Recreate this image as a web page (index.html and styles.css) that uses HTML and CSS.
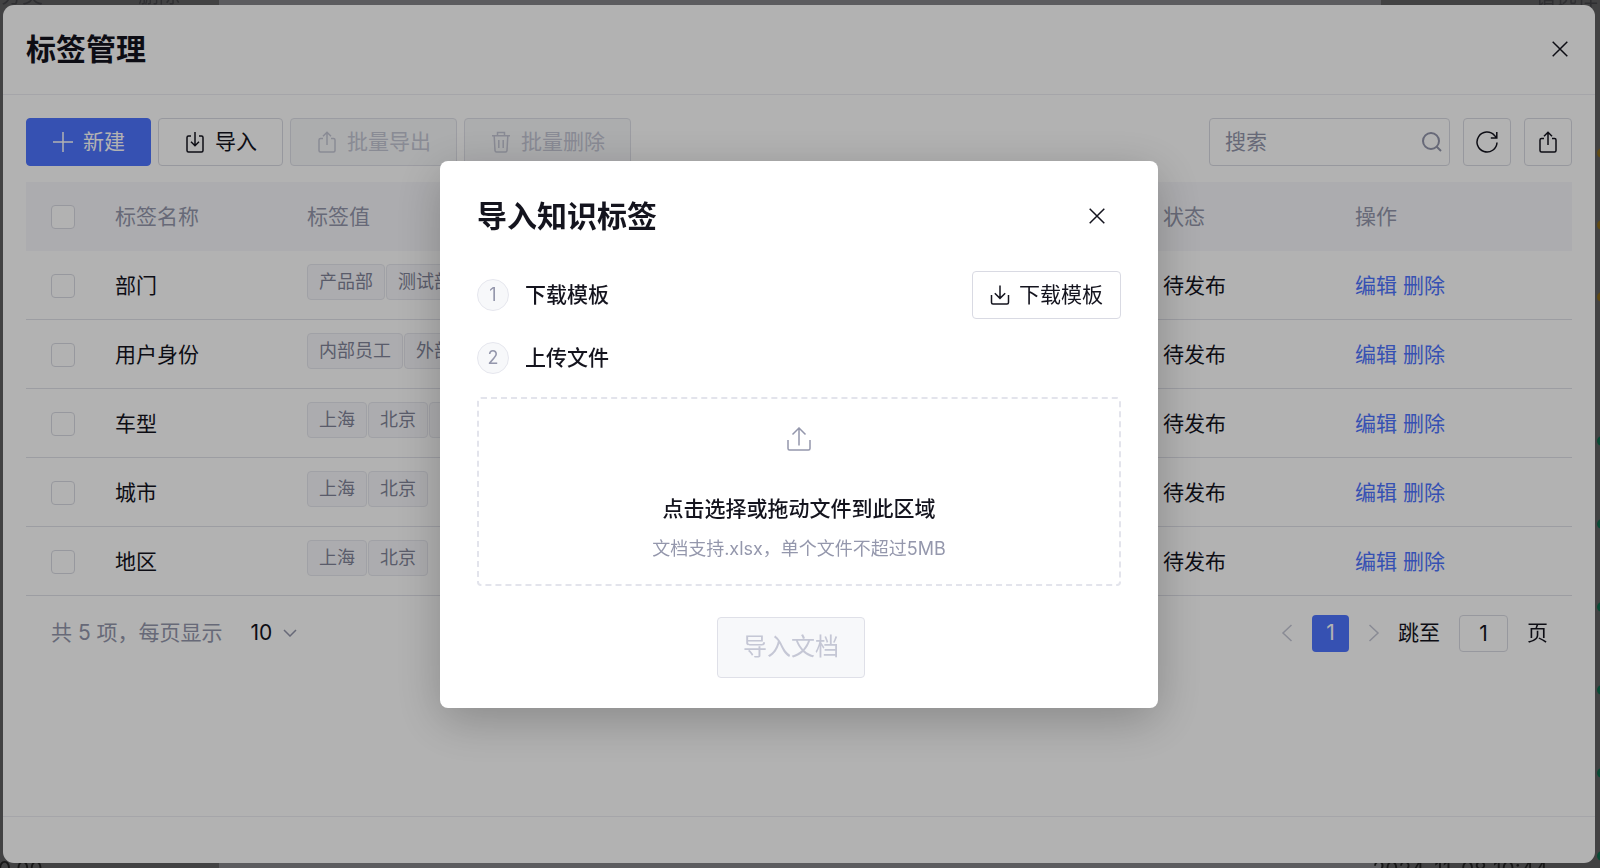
FILE: index.html
```html
<!DOCTYPE html>
<html lang="zh-CN">
  <head>
    <meta charset="UTF-8" />
    <meta name="viewport" content="width=device-width, initial-scale=1.0" />
    <title>标签管理</title>
    <link rel="stylesheet" href="styles.css">
  </head>
  <body>
    <!-- page under the drawer -->
    <div class="page" aria-hidden="true">
      <div class="page-side"></div>
      <div class="page-main"></div>
      <div class="page-side"></div>
      <span class="peek peek-category">分类</span>
      <span class="peek peek-delete">删除</span>
      <span class="peek peek-select">请选择</span>
      <span class="peek peek-size">0.00</span>
      <span class="peek peek-date">2024-11-08 10:44</span>
      <div class="dots">
        <i class="dot"></i>
        <i class="dot"></i>
        <i class="dot"></i>
        <i class="dot green"></i>
        <i class="dot green"></i>
        <i class="dot green"></i>
        <i class="dot green"></i>
        <i class="dot green"></i>
        <i class="dot green"></i>
      </div>
    </div>

    <section class="drawer">
      <header class="drawer-header">
        <h1>标签管理</h1>
        <button type="button" class="close" aria-label="关闭">
          <svg width="16" height="16" viewBox="0 0 16 16"><path d="M.7.7l14.6 14.6M15.3.7L.7 15.3" /></svg>
        </button>
      </header>

      <main class="drawer-body">
        <div class="toolbar">
          <button type="button" class="button primary">
            <svg width="22" height="22" viewBox="0 0 22 22"><path d="M11 1v20M1 11h20" /></svg>
            新建
          </button>
          <button type="button" class="button">
            <svg width="22" height="22" viewBox="0 0 22 22"><path d="M7 5H4.500Q3 5 3 6.500V19.500Q3 21 4.500 21H17.500Q19 21 19 19.500V6.500Q19 5 17.500 5H15M11 1v13.500M7 10.800l4 4 4-4" /></svg>
            导入
          </button>
          <button type="button" class="button" disabled>
            <svg width="22" height="22" viewBox="0 0 22 22"><path d="M7 7.500H4.500Q3 7.500 3 9V19.500Q3 21 4.500 21H17.500Q19 21 19 19.500V9Q19 7.500 17.500 7.500H15M11 14V1.500M7 5.200l4-4 4 4" /></svg>
            批量导出
          </button>
          <button type="button" class="button" disabled>
            <svg width="22" height="22" viewBox="0 0 22 22"><path d="M2 4.800h18M7.500 4.500V1.500h7v3M4.200 5l.8 14.500Q5.100 21 6.500 21h9Q16.900 21 17 19.500L17.800 5M8.800 9v8M13.200 9v8" /></svg>
            批量删除
          </button>
          <div class="search">
            <input type="text" placeholder="搜索" aria-label="搜索" />
            <svg width="20" height="20" viewBox="0 0 20 20"><circle cx="9" cy="9" r="8" /><path d="M14.500 14.500l4.500 4.500" /></svg>
          </div>
          <button type="button" class="button icon" aria-label="刷新">
            <svg width="22" height="22" viewBox="0 0 22 22"><path d="M21 11.500a10 10 0 1 1-2.500-7.100L20.500 6.500M20.800 1v6h-6" /></svg>
          </button>
          <button type="button" class="button icon" aria-label="导出">
            <svg width="22" height="22" viewBox="0 0 22 22"><path d="M7 7.500H4.500Q3 7.500 3 9V19.500Q3 21 4.500 21H17.500Q19 21 19 19.500V9Q19 7.500 17.500 7.500H15M11 14V1.500M7 5.200l4-4 4 4" /></svg>
          </button>
        </div>

        <table class="tags-table">
          <thead>
            <tr>
              <th class="col-check"><input type="checkbox" aria-label="全选" /></th>
              <th class="col-name">标签名称</th>
              <th>标签值</th>
              <th class="col-status">状态</th>
              <th class="col-action">操作</th>
            </tr>
          </thead>
          <tbody>
            <tr>
              <td><input type="checkbox" aria-label="部门" /></td>
              <td>部门</td>
              <td><div class="tags"><span>产品部</span><span>测试部</span></div></td>
              <td>待发布</td>
              <td><a href="#">编辑</a> <a href="#">删除</a></td>
            </tr>
            <tr>
              <td><input type="checkbox" aria-label="用户身份" /></td>
              <td>用户身份</td>
              <td><div class="tags"><span>内部员工</span><span>外部</span></div></td>
              <td>待发布</td>
              <td><a href="#">编辑</a> <a href="#">删除</a></td>
            </tr>
            <tr>
              <td><input type="checkbox" aria-label="车型" /></td>
              <td>车型</td>
              <td><div class="tags"><span>上海</span><span>北京</span><span>广州</span></div></td>
              <td>待发布</td>
              <td><a href="#">编辑</a> <a href="#">删除</a></td>
            </tr>
            <tr>
              <td><input type="checkbox" aria-label="城市" /></td>
              <td>城市</td>
              <td><div class="tags"><span>上海</span><span>北京</span></div></td>
              <td>待发布</td>
              <td><a href="#">编辑</a> <a href="#">删除</a></td>
            </tr>
            <tr>
              <td><input type="checkbox" aria-label="地区" /></td>
              <td>地区</td>
              <td><div class="tags"><span>上海</span><span>北京</span></div></td>
              <td>待发布</td>
              <td><a href="#">编辑</a> <a href="#">删除</a></td>
            </tr>
          </tbody>
        </table>

        <div class="pagination">
          <label class="total" for="page-size">共 5 项，每页显示</label>
          <div class="page-size">
            <select id="page-size">
              <option>10</option>
              <option>20</option>
              <option>50</option>
            </select>
            <svg width="14" height="8" viewBox="0 0 14 8"><path d="M1 1l6 6 6-6" /></svg>
          </div>
          <button type="button" class="arrow" aria-label="上一页" disabled>
            <svg width="12" height="18" viewBox="0 0 12 18"><path d="M10.500 1L2 9l8.500 8" /></svg>
          </button>
          <button type="button" class="current">1</button>
          <button type="button" class="arrow" aria-label="下一页" disabled>
            <svg width="12" height="18" viewBox="0 0 12 18"><path d="M1.500 1L10 9l-8.500 8" /></svg>
          </button>
          <label for="jump">跳至</label>
          <input type="text" id="jump" value="1" />
          <span>页</span>
        </div>
      </main>

      <footer class="drawer-footer"></footer>
    </section>

    <div class="mask">
      <div class="modal" role="dialog" aria-labelledby="modal-title">
        <header class="modal-header">
          <h2 id="modal-title">导入知识标签</h2>
          <button type="button" class="close" aria-label="关闭">
            <svg width="16" height="16" viewBox="0 0 16 16"><path d="M.7.7l14.6 14.6M15.3.7L.7 15.3" /></svg>
          </button>
        </header>

        <div class="step">
          <span class="step-num">1</span>
          <h3>下载模板</h3>
          <button type="button" class="button download">
            <svg width="20" height="20" viewBox="0 0 20 20"><path d="M1.500 10v7.500Q1.500 19 3 19H17Q18.500 19 18.500 17.500V10M10 .5v12.500M4.800 8.200l5.200 5.200 5.200-5.200" /></svg>
            下载模板
          </button>
        </div>
        <div class="step">
          <span class="step-num">2</span>
          <h3>上传文件</h3>
        </div>

        <button type="button" class="upload">
          <svg width="24" height="24" viewBox="0 0 24 24"><path d="M1 13v8.500Q1 23 2.500 23H21.500Q23 23 23 21.500V13M12 18.500V1.200M5.500 7.500L12 1l6.500 6.500" /></svg>
          <strong>点击选择或拖动文件到此区域</strong>
          <small>文档支持.xlsx，单个文件不超过5MB</small>
        </button>

        <div class="modal-footer">
          <button type="button" class="button submit" disabled>导入文档</button>
        </div>
      </div>
    </div>
  </body>
</html>
```

FILE: styles.css
```css
* {
  box-sizing: border-box;
}
body {
  margin: 0;
  height: 100vh;
  padding: 5px 5px 5px 3px;
  overflow: hidden;
  font-family: Inter, "Noto Sans CJK SC", sans-serif;
  font-size: 21px;
  line-height: 32px;
  color: #14141e;
}
h1,
h2,
h3 {
  margin: 0;
}
h1,
h2 {
  font-size: 30px;
  font-weight: 700;
  line-height: 44px;
}
h3 {
  font-size: 21px;
  font-weight: 500;
  line-height: 32px;
}
button,
input,
select {
  font: inherit;
  color: inherit;
}
button {
  padding: 0;
  border: none;
  background: none;
  cursor: pointer;
}
svg {
  flex: none;
  fill: none;
  stroke: currentColor;
  stroke-width: 1.5;
}
a {
  color: #4e74ff;
  text-decoration: none;
}

/* page under the drawer */
.page {
  position: fixed;
  inset: 0;
  z-index: -1;
  display: flex;
  background: #848588;
}
.page-side {
  width: 219px;
  background: #5f5f61;
}
.page-main {
  flex: 1;
}
.peek {
  position: absolute;
  line-height: 24px;
  color: #222;
  white-space: nowrap;
}
.peek-category,
.peek-delete,
.peek-select {
  top: -17px;
  color: #444448;
}
.peek-category {
  left: 1px;
}
.peek-delete {
  left: 138px;
}
.peek-select {
  top: -14px;
  right: 2px;
}
.peek-size,
.peek-date {
  bottom: -14px;
}
.peek-size {
  left: -2px;
}
.peek-date {
  right: 52px;
}
.dots {
  position: absolute;
  top: 148px;
  right: -7px;
  display: flex;
  flex-direction: column;
  gap: 62px;
}
.dot {
  width: 10px;
  height: 10px;
  border-radius: 50%;
  background: #8a6a1e;
}
.dot.green {
  background: #0e6a4c;
}
.dot + .green {
  margin-top: 72px;
}
.green + .green {
  margin-top: 11px;
}

/* drawer */
.drawer {
  display: flex;
  flex-direction: column;
  height: 100%;
  border-radius: 11px;
  background: #fff;
}
.drawer-header {
  display: flex;
  align-items: center;
  justify-content: space-between;
  height: 90px;
  padding: 0 27px 2px 23px;
  border-bottom: 1px solid #ededf2;
}
.drawer-body {
  flex: 1;
  padding: 23px 23px 0;
}
.drawer-footer {
  height: 47px;
  border-top: 1px solid #ededf2;
}
.close {
  display: flex;
}

/* toolbar */
.toolbar {
  display: flex;
  gap: 7px;
  margin-bottom: 16px;
}
.button {
  display: flex;
  align-items: center;
  justify-content: center;
  gap: 9px;
  height: 48px;
  padding: 0 25px;
  border: 1px solid #d9dae3;
  border-radius: 4px;
  background: #fff;
  white-space: nowrap;
}
.button.primary {
  border-color: #4e74ff;
  background: #4e74ff;
  color: #fff;
}
.button:disabled {
  border-color: #dfe0e8;
  background: #f7f8fa;
  color: #c5c7d5;
  cursor: not-allowed;
}
.button.icon {
  width: 48px;
  padding: 0;
  margin-left: 6px;
}
.search {
  display: flex;
  align-items: center;
  width: 241px;
  height: 48px;
  margin-left: auto;
  padding: 0 7px 0 15px;
  border: 1px solid #d9dae3;
  border-radius: 4px;
  color: #9497ac;
}
.search input {
  flex: 1;
  min-width: 0;
  padding: 0;
  border: none;
  outline: none;
  background: none;
}
.search input::placeholder {
  color: #9497ac;
}
.search svg {
  stroke-width: 2;
}

/* table */
.tags-table {
  width: 100%;
  table-layout: fixed;
  border-collapse: separate;
  border-spacing: 0;
}
.tags-table th,
.tags-table td {
  height: 69px;
  padding: 1px 16px 0;
  text-align: left;
  vertical-align: middle;
  border-bottom: 1px solid #e0e1e9;
}
.tags-table th {
  font-weight: 400;
  color: #9497ac;
  background: #f7f7fb;
  border-bottom-color: #f7f7fb;
}
.tags-table .col-check {
  width: 73px;
}
.tags-table th:first-child,
.tags-table td:first-child {
  padding: 1px 0 0 25px;
}
.col-name,
.col-status {
  width: 192px;
}
.col-action {
  width: 233px;
}
.tags-table input {
  display: block;
  appearance: none;
  width: 24px;
  height: 24px;
  margin: 0;
  border: 1px solid #d9dae3;
  border-radius: 4px;
  background: #fff;
}
.tags {
  display: flex;
  gap: 1px;
  margin-bottom: 7px;
}
.tags span {
  padding: 0 11px;
  border: 1px solid #e6e7ee;
  border-radius: 4px;
  background: #f7f7fb;
  color: #828599;
  font-size: 18px;
  line-height: 34px;
}

/* pagination */
.pagination {
  display: flex;
  align-items: center;
  height: 74px;
  padding: 0 24px 0 25px;
}
.total {
  color: #9497ac;
}
.page-size {
  display: flex;
  align-items: center;
  gap: 5px;
  margin: 0 auto 0 28px;
  color: #9497ac;
}
.page-size select {
  appearance: none;
  padding: 0;
  border: none;
  background: none;
  color: #14141e;
}
.arrow {
  display: flex;
  color: #c5c7d5;
}
.current {
  width: 37px;
  height: 37px;
  margin: 0 19px;
  border-radius: 4px;
  background: #4e74ff;
  color: #fff;
}
.pagination .arrow + label {
  margin-left: 18px;
}
.pagination input {
  width: 49px;
  height: 37px;
  margin: 0 19px;
  padding: 0;
  border: 1px solid #d9dae3;
  border-radius: 4px;
  background: #fff;
  text-align: center;
}

/* import dialog */
.mask {
  position: fixed;
  inset: 0;
  display: flex;
  align-items: center;
  justify-content: center;
  padding-right: 2px;
  background: rgba(0, 0, 0, 0.3);
}
.modal {
  width: 718px;
  padding: 33px 37px 30px;
  border-radius: 8px;
  background: #fff;
  box-shadow: 0 12px 48px rgba(0, 0, 0, 0.24);
}
.modal-header {
  display: flex;
  align-items: center;
  justify-content: space-between;
  margin-bottom: 33px;
  padding-right: 16px;
}
.step {
  display: flex;
  align-items: center;
  gap: 16px;
  height: 48px;
  margin-bottom: 15px;
}
.step-num {
  width: 32px;
  height: 32px;
  border: 1px solid #e6e7ee;
  border-radius: 50%;
  background: #f7f8fa;
  color: #9497ac;
  font-size: 18px;
  line-height: 30px;
  text-align: center;
}
.download {
  margin-left: auto;
  padding: 0 17px;
}
.upload {
  display: flex;
  flex-direction: column;
  align-items: center;
  width: 100%;
  padding: 28px 0 21px;
  border: 2px dashed #e3e4ec;
  border-radius: 4px;
}
.upload svg {
  color: #9497ac;
}
.upload strong {
  margin: 42px 0 10px;
  font-weight: 500;
}
.upload small {
  color: #9497ac;
  font-size: 18px;
  line-height: 28px;
}
.modal-footer {
  display: flex;
  justify-content: center;
  padding: 31px 16px 0 0;
}
.submit {
  height: 61px;
  font-size: 24px;
}
```
